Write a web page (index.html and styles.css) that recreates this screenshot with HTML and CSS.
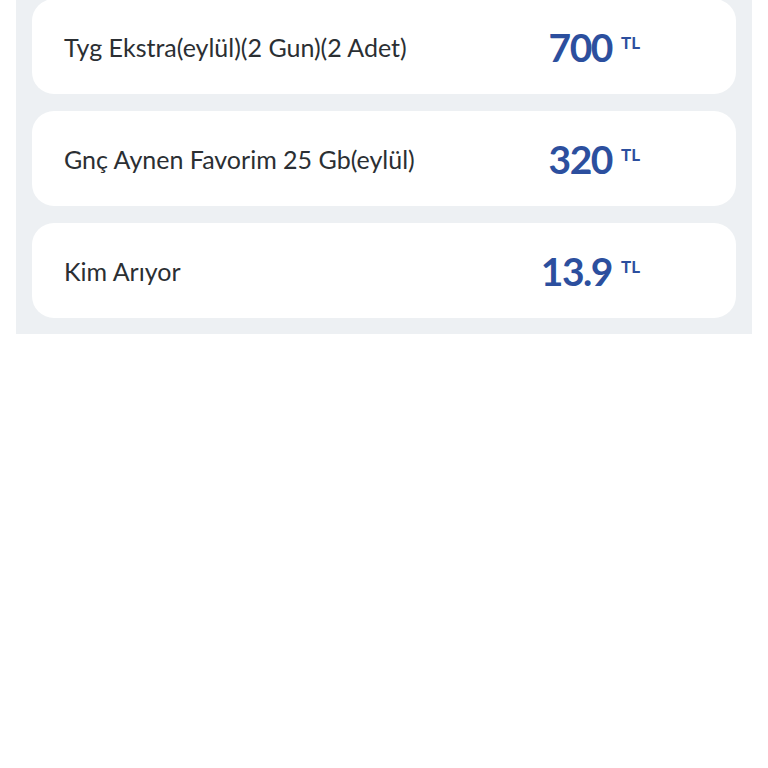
FILE: index.html
```html
<!DOCTYPE html>
<html lang="tr">

<head>
    <meta charset="UTF-8">
    <meta name="viewport" content="width=device-width, initial-scale=1.0">
    <title>Paketler</title>
    <link rel="stylesheet" href="styles.css">
</head>

<body>
    <div class="panel">
        <div class="item">
            <span class="name">Tyg Ekstra(eylül)(2 Gun)(2 Adet)</span>
            <span class="price">700<sup>TL</sup></span>
        </div>
        <div class="item">
            <span class="name">Gnç Aynen Favorim 25 Gb(eylül)</span>
            <span class="price">320<sup>TL</sup></span>
        </div>
        <div class="item">
            <span class="name">Kim Arıyor</span>
            <span class="price">13.9<sup>TL</sup></span>
        </div>
    </div>
</body>

</html>
```

FILE: styles.css
```css
body {
    margin: 0;
    background: #fff;
    font-family: Lato, "Noto Sans", sans-serif;
}

.panel {
    margin: -1px 16px 0;
    padding: 0 16px 16px;
    background: #edf0f3;
    display: flex;
    flex-direction: column;
    gap: 17px;
}

.item {
    height: 95px;
    background: #fff;
    border-radius: 22px;
    display: flex;
    align-items: center;
    justify-content: space-between;
    padding: 0 96px 0 32px;
}

.name {
    font-size: 25px;
    color: #2b2f33;
}

.price {
    font-size: 39px;
    font-weight: 700;
    color: #2c4f9e;
    letter-spacing: -1.5px;
}

.price sup {
    font-size: 17px;
    margin-left: 9px;
    vertical-align: 13px;
    letter-spacing: 0;
}
```
